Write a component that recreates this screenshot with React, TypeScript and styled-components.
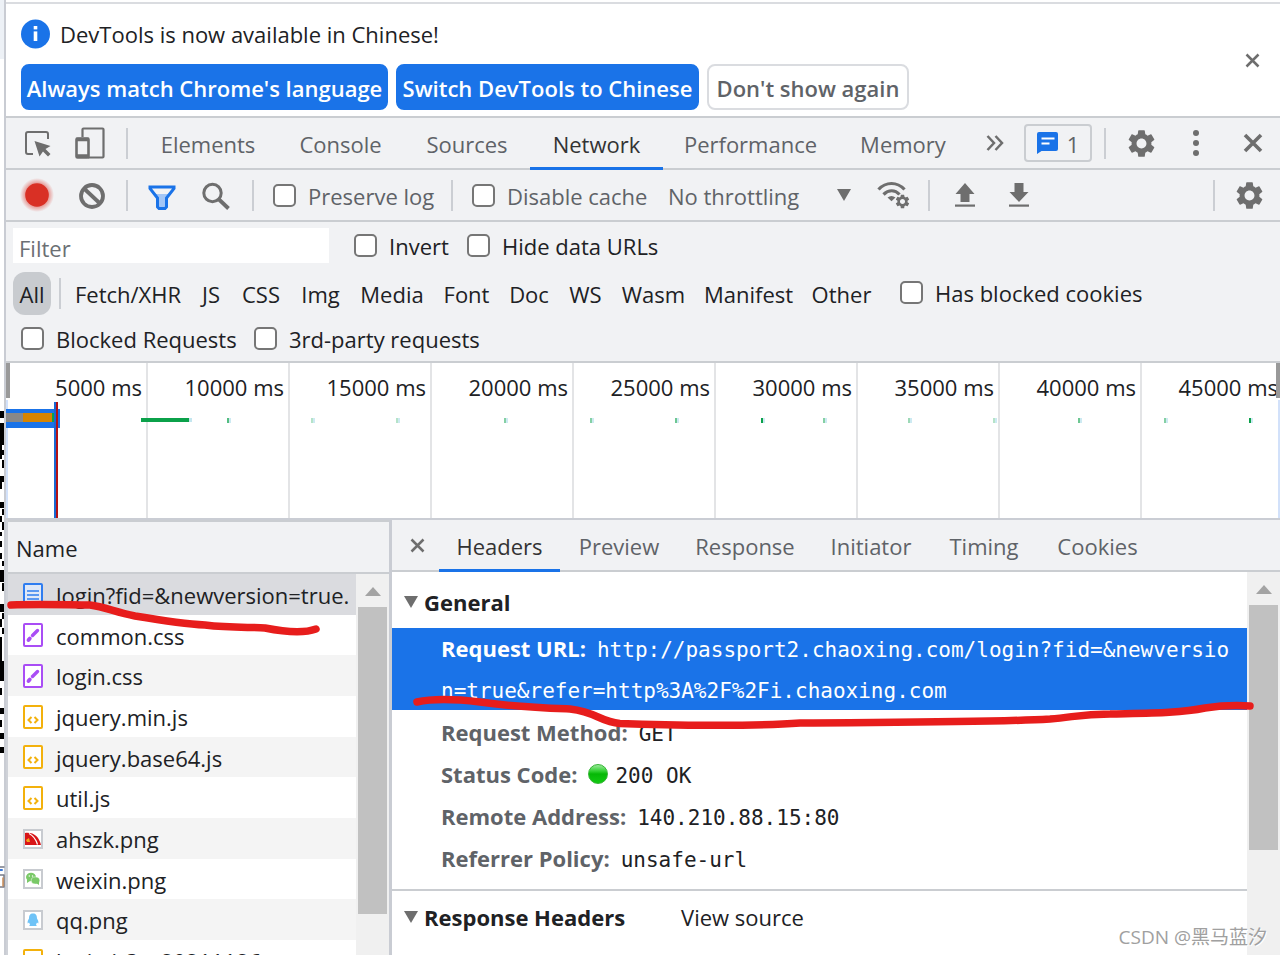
import React from 'react';
import styled, { createGlobalStyle, css } from 'styled-components';
import { MdSettings } from 'react-icons/md';

const GlobalStyle = createGlobalStyle`
  *, *::before, *::after { box-sizing: border-box; }
  html, body { margin: 0; padding: 0; background: #fff; }
  body {
    font-family: 'Open Sans', 'Noto Sans', 'Noto Sans CJK SC', sans-serif;
    font-size: 22px;
    line-height: 30px;
    color: #202124;
    overflow: hidden;
  }
  button, input, select { font: inherit; color: inherit; margin: 0; }
`;

const line = '#cacdd1';
const panel = '#f1f2f4';
const blue = '#1a73e8';
const muted = '#5f6368';
const iconGrey = '#6e6e6e';
const mono = "'DejaVu Sans Mono', 'Liberation Mono', monospace";

const Page = styled.div`
  position: relative;
  display: flex;
  height: 100vh;
  overflow: hidden;
  white-space: nowrap;
`;
const Gutter = styled.div`
  flex: 0 0 6px;
  border-right: 2px solid #c9ccd3;
  background: linear-gradient(#edf1f6 59px, #fff 59px);
`;
const DevTools = styled.main`
  flex: 1;
  min-width: 0;
  display: flex;
  flex-direction: column;
  border-top: 2px solid #dadce0;
  margin-top: 2px;
`;

/* Language notice */
const Infobar = styled.section`
  display: flex;
  justify-content: space-between;
  align-items: center;
  height: 114px;
  flex: none;
  padding: 0 14px 0 15px;
  border-bottom: 2px solid ${line};
`;
const InfoText = styled.div`
  display: flex;
  align-items: center;
  gap: 10px;
  height: 60px;
  padding-bottom: 1px;
`;
const InfoActions = styled.div`
  display: flex;
  gap: 8px;
  height: 52px;
`;
const InfoButton = styled.button<{ $primary?: boolean; $w: number }>`
  width: ${p => p.$w}px;
  height: 46px;
  padding: 2px 0 0;
  border-radius: 8px;
  font-weight: 600;
  border: 2px solid ${p => (p.$primary ? blue : '#dadce0')};
  background: ${p => (p.$primary ? blue : '#fff')};
  color: ${p => (p.$primary ? '#fff' : muted)};
`;

/* Toolbars */
const Bar = styled.div`
  display: flex;
  align-items: center;
  flex: none;
  height: 52px;
  background: ${panel};
  border-bottom: 2px solid ${line};
`;
const MainBar = styled(Bar)`padding-left: 5px;`;
const NetBar = styled(Bar)`padding: 0 4px 0 5px; color: ${muted};`;
const DetailBar = styled(Bar)`padding-left: 4px;`;
const IconButton = styled.button<{ $w?: number }>`
  display: inline-flex;
  align-items: center;
  justify-content: center;
  flex: none;
  width: ${p => p.$w ?? 54}px;
  height: 40px;
  padding: 0;
  border: 0;
  background: none;
  color: ${iconGrey};
`;
const Divider = styled.span<{ $l: number; $r: number }>`
  flex: none;
  width: 2px;
  height: 31px;
  margin: 0 ${p => p.$r}px 0 ${p => p.$l}px;
  background: #cbced3;
`;
const TabList = styled.div`
  display: flex;
  align-self: stretch;
`;
const Tab = styled.button<{ $w: number; $active?: boolean }>`
  width: ${p => p.$w}px;
  height: 52px;
  padding: 0;
  border: 0;
  background: none;
  color: ${muted};
  ${p => p.$active && css`
    color: #333;
    box-shadow: inset 0 -3px ${blue};
  `}
`;
const Right = styled.div`
  display: flex;
  align-items: center;
  margin-left: auto;
`;
const IssueBadge = styled.button`
  display: flex;
  align-items: center;
  justify-content: center;
  gap: 9px;
  width: 68px;
  height: 38px;
  margin-left: 3px;
  padding: 0;
  border: 2px solid ${line};
  border-radius: 4px;
  background: none;
  color: ${muted};
`;

const CheckLabel = styled.label<{ $w?: number }>`
  display: inline-flex;
  align-items: center;
  gap: 12px;
  flex: none;
  width: ${p => (p.$w ? p.$w + 'px' : 'auto')};
  height: 30px;
`;
const CheckInput = styled.input`
  appearance: none;
  flex: none;
  width: 23px;
  height: 23px;
  border: 2px solid #767676;
  border-radius: 5px;
  background: #fff;
`;
const CheckText = styled.span`padding-top: 1px;`;
function Check({ children, w }: { children: string; w?: number }) {
  return (
    <CheckLabel $w={w}>
      <CheckInput type="checkbox" />
      <CheckText>{children}</CheckText>
    </CheckLabel>
  );
}

const SelectWrap = styled.div`
  position: relative;
  width: 192px;
  padding-top: 1px;
  svg { position: absolute; right: 9px; top: 9px; }
`;
const Select = styled.select`
  appearance: none;
  width: 100%;
  padding: 0;
  border: 0;
  background: none;
`;

/* Filters */
const Filters = styled.section`
  flex: none;
  height: 141px;
  padding: 6px 8px 0 7px;
  background: ${panel};
  border-bottom: 2px solid ${line};
`;
const FilterRow = styled.div<{ $h: number; $indent?: number }>`
  display: flex;
  align-items: center;
  height: ${p => p.$h}px;
  padding-left: ${p => p.$indent ?? 0}px;
`;
const FilterInput = styled.input`
  width: 316px;
  height: 35px;
  margin-right: 25px;
  padding: 4px 6px 0;
  border: 0;
  background: #fff;
  &::placeholder { color: #6b6f74; opacity: 1; }
`;
const TypeButton = styled.button<{ $w: number; $active?: boolean }>`
  flex: none;
  width: ${p => p.$w}px;
  height: 43px;
  padding: 2px 0 0;
  border: 0;
  border-radius: 12px;
  background: ${p => (p.$active ? '#c8cbcf' : 'none')};
`;
const Blocked = styled.div`
  margin-left: 19px;
  display: flex;
  height: 32px;
`;

/* Overview timeline */
const Timeline = styled.section`
  position: relative;
  display: flex;
  flex: none;
  height: 157px;
  overflow: hidden;
  background: #fff;
  border-bottom: 2px solid #cacdd4;
`;
const Tick = styled.div`
  flex: 0 0 142px;
  padding: 9px 4px 0 0;
  text-align: right;
  border-right: 2px solid #e3e4e6;
`;
const Marks = styled.svg`
  position: absolute;
  left: 0;
  top: 0;
`;
const RangeHandle = styled.div`
  position: absolute;
  right: 0;
  top: 0;
  width: 4px;
  height: 35px;
  background: #999;
  &::after {
    content: '';
    position: absolute;
    right: 0;
    top: 37px;
    width: 2px;
    height: 120px;
    background: #d2e1fa;
  }
`;

/* Split view */
const Split = styled.div`
  display: flex;
  flex: 1;
  min-height: 0;
`;
const ListPane = styled.section`
  flex: 0 0 386px;
  display: grid;
  grid-template-columns: 1fr 33px;
  grid-template-rows: 1fr;
  border-left: 2px solid #cfd2d8;
  border-right: 3px solid #c9ccd3;
  overflow: hidden;
`;
const FileTable = styled.table`
  width: 100%;
  border-spacing: 0;
  table-layout: fixed;
`;
const NameHead = styled.th`
  height: 54px;
  padding: 2px 0 0 8px;
  text-align: left;
  font-weight: 400;
  background: ${panel};
  border-top: 2px solid ${line};
  border-bottom: 2px solid ${line};
`;
const FileRow = styled.tr`
  height: 41px;
  &:nth-child(3n + 2) { height: 40px; }
  &:nth-child(odd) { background: #f4f4f4; }
  &:nth-child(1) { background: #dadbdf; }
`;
const FileCell = styled.td`padding: 0; overflow: hidden;`;
const FileInner = styled.div`
  display: flex;
  align-items: center;
  gap: 13px;
  height: 40px;
  padding-left: 15px;
  overflow: hidden;
  svg { flex: none; }
`;
const FileName = styled.span`padding-top: 1px;`;
const ListHeadFill = styled.div`
  height: 54px;
  background: ${panel};
  border-top: 2px solid ${line};
  border-bottom: 2px solid ${line};
`;
const Column = styled.div`
  display: flex;
  flex-direction: column;
  min-height: 0;
`;
const Scrollbar = styled.div<{ $fill?: boolean }>`
  flex: ${p => (p.$fill ? '1' : 'none')};
  width: 33px;
  background: #f0f0f0;
  display: flex;
  flex-direction: column;
  align-items: center;
`;
const ScrollArrow = styled.span`
  display: flex;
  align-items: center;
  justify-content: center;
  height: 33px;
  padding-top: 2px;
`;
const Thumb = styled.span<{ $h: number }>`
  width: 29px;
  height: ${p => p.$h}px;
  background: #c1c1c1;
`;

const Detail = styled.section`
  flex: 1;
  min-width: 0;
  display: flex;
  flex-direction: column;
`;
const DetailBody = styled.div`
  display: flex;
  flex: 1;
  min-height: 0;
`;
const DetailContent = styled.div`
  flex: 1;
  min-width: 0;
  overflow: hidden;
`;
const SectionHead = styled.div<{ $h: number }>`
  display: flex;
  align-items: center;
  gap: 6px;
  height: ${p => p.$h}px;
  padding: 4px 0 0 12px;
`;
const SectionTitle = styled.h2`
  margin: 0;
  font-size: 22px;
  line-height: 30px;
  font-weight: 700;
`;
const ViewSource = styled.button`
  margin-left: 50px;
  padding: 0;
  border: 0;
  background: none;
`;
const Headers = styled.dl`
  margin: 0;
  padding-bottom: 10px;
  border-bottom: 2px solid ${line};
`;
const HeaderRow = styled.div<{ $selected?: boolean }>`
  display: flex;
  align-items: baseline;
  height: 42px;
  padding: 6px 0 0 49px;
  color: ${muted};
  ${p => p.$selected && css`
    display: block;
    height: auto;
    margin-bottom: 1px;
    padding: 0 12px 0 49px;
    line-height: 41px;
    white-space: normal;
    word-break: break-all;
    background: ${blue};
    color: #fff;
  `}
`;
const Key = styled.dt`
  display: inline;
  margin-right: 11px;
  font-weight: 700;
`;
const Value = styled.dd<{ $selected?: boolean }>`
  display: inline;
  margin: 0;
  font-family: ${mono};
  font-size: 21px;
  line-height: 30px;
  color: ${p => (p.$selected ? '#fff' : '#202124')};
`;
const StatusDot = styled.span`
  display: inline-block;
  width: 20px;
  height: 20px;
  margin-right: 7px;
  vertical-align: -1px;
  border-radius: 50%;
  background: linear-gradient(#9be89b, #2fd02f 35%, #06b806 50%, #12c912);
  border: 1px solid #35b535;
`;

const Strokes = styled.svg`
  position: absolute;
  left: 0;
  top: 0;
  pointer-events: none;
`;
const Watermark = styled.div`
  position: absolute;
  right: 13px;
  bottom: 3px;
  font-size: 19px;
  font-family: 'Open Sans', 'Noto Sans CJK SC', sans-serif;
  color: #a0a0a0;
  text-shadow: 1px 1px #fff;
`;

const Cross = ({ size, w }: { size: number; w: number }) => (
  <svg width={size} height={size} viewBox="0 0 20 20" stroke="currentColor" strokeWidth={w}>
    <path d="M2 2 18 18M18 2 2 18" />
  </svg>
);
const InfoIcon = () => (
  <svg width="29" height="30" viewBox="0 0 29 30">
    <circle cx="14.5" cy="15" r="14.5" fill={blue} />
    <rect x="12.7" y="7" width="3.6" height="3.4" fill="#fff" />
    <rect x="12.7" y="12.4" width="3.6" height="9.6" fill="#fff" />
  </svg>
);
const InspectIcon = () => (
  <svg width="26" height="28" viewBox="0 -2 26 28" fill="none" stroke="currentColor" strokeWidth="2">
    <path d="M8 23H3a2 2 0 0 1-2-2V3a2 2 0 0 1 2-2h18a2 2 0 0 1 2 2v5" />
    <path d="M9.500 10 25.500 15l-5 3 5 5-2.500 2.500-5-5L14.500 25.500z" fill="currentColor" stroke="none" />
  </svg>
);
const DeviceIcon = () => (
  <svg width="30" height="32" viewBox="0 0 30 32" fill="none" stroke="currentColor">
    <path d="M7.500 10V2.500a1 1 0 0 1 1-1h19a1 1 0 0 1 1 1v27a1 1 0 0 1-1 1H13" strokeWidth="2.200" />
    <rect x="1.500" y="11.500" width="12" height="19" rx="1" strokeWidth="2.600" />
    <path d="M1 12.500h13M1 29h13" strokeWidth="3.500" />
  </svg>
);
const MoreTabsIcon = () => (
  <svg width="18" height="16" viewBox="0 0 18 16" fill="none" stroke="currentColor" strokeWidth="2.500">
    <path d="M1.500 1 8 8l-6.500 7M9.500 1 16 8l-6.500 7" />
  </svg>
);
const ChatIcon = () => (
  <svg width="21" height="22" viewBox="0 0 21 22">
    <path d="M2 0h17a2 2 0 0 1 2 2v15a2 2 0 0 1-2 2H4.500L0 22V2a2 2 0 0 1 2-2z" fill={blue} />
    <path d="M4.500 6.500h13M4.500 11.500h8" stroke="#fff" strokeWidth="2" />
  </svg>
);
const DotsIcon = () => (
  <svg width="6" height="26" viewBox="0 0 6 26" fill="currentColor">
    <circle cx="3" cy="3" r="3" /><circle cx="3" cy="13" r="3" /><circle cx="3" cy="23" r="3" />
  </svg>
);
const RecordIcon = () => (
  <svg width="36" height="36" viewBox="0 0 36 36">
    <defs>
      <radialGradient id="glow">
        <stop offset="65%" stopColor="#d93025" stopOpacity=".5" />
        <stop offset="100%" stopColor="#d93025" stopOpacity="0" />
      </radialGradient>
    </defs>
    <circle cx="18" cy="18" r="17" fill="url(#glow)" />
    <circle cx="18" cy="18" r="11.800" fill="#d93025" />
  </svg>
);
const ClearIcon = () => (
  <svg width="26" height="28" viewBox="0 -2 26 28" fill="none" stroke="currentColor" strokeWidth="3.800">
    <circle cx="13" cy="13" r="11" /><path d="M5 5.500 21 20.500" />
  </svg>
);
const FunnelIcon = () => (
  <svg width="28" height="29" viewBox="0 -4 28 29">
    <path d="M7 9h14l-3.500 5v8.500h-7V14z" fill="#a3c6f6" />
    <path d="M2 2h24v1.500L18.500 13v9L17 23.500h-6L9.500 22v-9L2 3.500z" fill="none" stroke={blue} strokeWidth="3" />
  </svg>
);
const SearchIcon = () => (
  <svg width="28" height="30" viewBox="0 -2 28 30" fill="none" stroke="currentColor">
    <circle cx="10.500" cy="11" r="8.700" strokeWidth="3" /><path d="m16.500 17 10 9.500" strokeWidth="3.800" />
  </svg>
);
const WifiIcon = () => (
  <svg width="34" height="28" viewBox="0 0 34 28" fill="none" stroke="currentColor" strokeWidth="3.200">
    <path d="M1.500 8.500C9 .5 20 .5 27.500 8.500" />
    <path d="M6.500 13.500c5-5 11.500-5 16 0" />
    <path d="M10.500 16.500q4-3 8 0l-4 3.700z" fill="currentColor" stroke="none" />
    <MdSettings x="17" y="12" size={17} color="currentColor" strokeWidth="0" />
  </svg>
);
const TransferIcon = ({ up }: { up?: boolean }) => (
  <svg width="20" height="24" viewBox="0 0 20 24" fill="currentColor">
    <path d={up ? 'M10 0 19.500 11h-5v8h-9v-8h-5z' : 'M10 19 19.500 9h-5V0h-9v9h-5z'} />
    <rect y="21.500" width="20" height="2.200" />
  </svg>
);
const Down = () => (
  <svg width="14" height="12" viewBox="0 0 14 12"><path d="M0 0h14L7 12z" fill={iconGrey} /></svg>
);
const Up = () => (
  <svg width="16" height="9" viewBox="0 0 16 9"><path d="M0 9h16L8 0z" fill="#a3a3a3" /></svg>
);

type Kind = 'doc' | 'css' | 'js' | 'ahszk' | 'weixin' | 'qq';
function FileIcon({ kind }: { kind: Kind }) {
  if (kind === 'doc' || kind === 'css' || kind === 'js') {
    const color = { doc: '#2f7df0', css: '#a94df5', js: '#f3b10c' }[kind];
    return (
      <svg width="20" height="24" viewBox="0 0 20 24" fill="none" stroke={color}>
        <rect x="1" y="1" width="18" height="22" rx="1" strokeWidth="2" fill={kind === 'doc' ? '#dfe8f7' : '#fff'} />
        {kind === 'doc' && <path d="M4 8h12M4 12h12M4 16h12M4 20h12" strokeWidth="1.700" />}
        {kind === 'css' && (
          <g strokeLinecap="round">
            <path d="m9.500 12.500 5-5" strokeWidth="3.400" /><path d="m5.500 17 1.300-1.500" strokeWidth="3.800" />
          </g>
        )}
        {kind === 'js' && <path d="m8.500 12-3 3 3 3M11.500 12l3 3-3 3" strokeWidth="2" />}
      </svg>
    );
  }
  return (
    <svg width="20" height="20" viewBox="0 0 20 20">
      <rect x="1" y="1" width="18" height="18" fill="#fff" stroke="#c8cbd0" strokeWidth="2" />
      {kind === 'ahszk' && (
        <g>
          <path d="M2 4c9-1 14 4 16 12H2z" fill="#d81518" />
          <path d="M6 4.500c4 2 7 6 8.500 11" fill="none" stroke="#fff" strokeWidth="1.200" />
          <path d="M3 11l3-2 1 4H4z" fill="#f2a51b" />
        </g>
      )}
      {kind === 'weixin' && (
        <g fill="#7ac968">
          <ellipse cx="8" cy="8" rx="5" ry="4.300" /><path d="m4 10 0 4 3-2z" />
          <ellipse cx="12.500" cy="11.500" rx="4.300" ry="3.600" stroke="#fff" strokeWidth=".5" /><path d="m13 14 3 2v-4z" />
          <g fill="#fff"><circle cx="6.300" cy="7" r=".7" /><circle cx="9.500" cy="7" r=".7" /></g>
        </g>
      )}
      {kind === 'qq' && (
        <path d="M10 3.500c3 0 4 2 4 5 1 1.500 1.700 3 1.300 5l-1.300-1-1 2 .8 1.500H6.200L7 14.500l-1-2-1.300 1c-.4-2 .3-3.500 1.300-5 0-3 1-5 4-5z" fill="#6fc3f7" />
      )}
    </svg>
  );
}

const tabs: [string, number][] = [
  ['Elements', 138], ['Console', 127], ['Sources', 126], ['Network', 133], ['Performance', 175], ['Memory', 130],
];
const detailTabs: [string, number][] = [
  ['Headers', 121], ['Preview', 118], ['Response', 134], ['Initiator', 118], ['Timing', 108], ['Cookies', 119],
];
const types: [string, number][] = [
  ['Fetch/XHR', 126], ['JS', 40], ['CSS', 60], ['Img', 59], ['Media', 84], ['Font', 65],
  ['Doc', 60], ['WS', 53], ['Wasm', 83], ['Manifest', 107], ['Other', 79],
];
const files: [string, Kind][] = [
  ['login?fid=&newversion=true.', 'doc'], ['common.css', 'css'], ['login.css', 'css'],
  ['jquery.min.js', 'js'], ['jquery.base64.js', 'js'], ['util.js', 'js'],
  ['ahszk.png', 'ahszk'], ['weixin.png', 'weixin'], ['qq.png', 'qq'], ['login.js?v=20211126', 'js'],
];
const ticks = [5, 10, 15, 20, 25, 30, 35, 40, 45];
const requests: [number, number][] = [
  [221, .7], [305, .3], [390, .3], [498, .5], [584, .5], [669, .6], [755, 1],
  [817, .5], [902, .4], [987, .3], [1072, .6], [1158, .5], [1243, 1],
];
const noise: [number, number, number, number][] = [
  [0, 411, 4, 7], [0, 423, 4, 22], [0, 445, 2, 14], [2, 450, 2, 5], [2, 460, 2, 8], [0, 476, 4, 6],
  [0, 482, 2, 7], [0, 502, 4, 6], [2, 509, 2, 6], [0, 516, 2, 6], [2, 522, 2, 8], [0, 532, 2, 4],
  [0, 541, 2, 6], [0, 553, 2, 6], [2, 561, 2, 5], [0, 570, 4, 12], [2, 583, 2, 8], [0, 604, 4, 8],
  [2, 613, 2, 6], [0, 619, 2, 8], [2, 628, 2, 6], [0, 637, 2, 24], [0, 661, 4, 20],
  [0, 688, 2, 7], [0, 708, 4, 6], [0, 720, 2, 7], [0, 733, 4, 6], [0, 747, 4, 6],
];

export default function App() {
  return (
    <Page>
      <GlobalStyle />
      <Gutter />
      <DevTools>
        <Infobar>
          <div>
            <InfoText><InfoIcon /><span>DevTools is now available in Chinese!</span></InfoText>
            <InfoActions>
              <InfoButton $primary $w={367}>Always match Chrome's language</InfoButton>
              <InfoButton $primary $w={303}>Switch DevTools to Chinese</InfoButton>
              <InfoButton $w={202}>Don't show again</InfoButton>
            </InfoActions>
          </div>
          <IconButton $w={27} aria-label="Close notice"><Cross size={15} w={3.4} /></IconButton>
        </Infobar>

        <MainBar>
          <IconButton $w={53} aria-label="Inspect"><InspectIcon /></IconButton>
          <IconButton $w={52} aria-label="Device toolbar"><DeviceIcon /></IconButton>
          <Divider $l={10} $r={11} />
          <TabList>
            {tabs.map(([t, w]) => <Tab key={t} $w={w} $active={t === 'Network'}>{t}</Tab>)}
          </TabList>
          <IconButton $w={53} aria-label="More tabs"><MoreTabsIcon /></IconButton>
          <Right>
            <IssueBadge><ChatIcon /><CheckText>1</CheckText></IssueBadge>
            <Divider $l={12} $r={9} />
            <IconButton $w={52} aria-label="Settings"><MdSettings size={33} /></IconButton>
            <IconButton $w={58} aria-label="More options"><DotsIcon /></IconButton>
            <IconButton $w={55} aria-label="Close"><Cross size={20} w={3.6} /></IconButton>
          </Right>
        </MainBar>

        <NetBar>
          <IconButton $w={52} aria-label="Record"><RecordIcon /></IconButton>
          <IconButton $w={58} aria-label="Clear"><ClearIcon /></IconButton>
          <Divider $l={5} $r={8} />
          <IconButton $w={52} aria-label="Filter"><FunnelIcon /></IconButton>
          <IconButton $w={56} aria-label="Search"><SearchIcon /></IconButton>
          <Divider $l={8} $r={19} />
          <Check w={178}>Preserve log</Check>
          <Divider $l={0} $r={19} />
          <Check w={196}>Disable cache</Check>
          <SelectWrap>
            <Select aria-label="Throttling"><option>No throttling</option></Select>
            <Down />
          </SelectWrap>
          <IconButton $w={68} aria-label="Network conditions"><WifiIcon /></IconButton>
          <Divider $l={0} $r={8} />
          <IconButton aria-label="Import"><TransferIcon up /></IconButton>
          <IconButton aria-label="Export"><TransferIcon /></IconButton>
          <Right>
            <Divider $l={0} $r={7} />
            <IconButton aria-label="Network settings"><MdSettings size={33} /></IconButton>
          </Right>
        </NetBar>

        <Filters>
          <FilterRow $h={35}>
            <FilterInput placeholder="Filter" aria-label="Filter" />
            <Check w={113}>Invert</Check>
            <Check>Hide data URLs</Check>
          </FilterRow>
          <FilterRow $h={60}>
            <TypeButton $w={38} $active>All</TypeButton>
            <Divider $l={8} $r={4} />
            {types.map(([t, w]) => <TypeButton key={t} $w={w}>{t}</TypeButton>)}
            <Blocked><Check>Has blocked cookies</Check></Blocked>
          </FilterRow>
          <FilterRow $h={30} $indent={8}>
            <Check w={233}>Blocked Requests</Check>
            <Check>3rd-party requests</Check>
          </FilterRow>
        </Filters>

        <Timeline>
          {ticks.map(t => <Tick key={t}>{t}000 ms</Tick>)}
          <Marks width="1274" height="155">
            <rect width="4" height="35" fill="#999" />
            <rect y="37" width="2" height="118" fill="#d2e1fa" />
            <rect y="46" width="54" height="19" fill={blue} />
            <rect y="50" width="17" height="9" fill="#888" />
            <rect x="17" y="50" width="29" height="9" fill="#d68400" />
            <rect x="46" y="50" width="2" height="9" fill="#0ba14a" />
            <rect x="48" y="39" width="2" height="116" fill="#1967d2" />
            <rect x="50" y="39" width="2" height="116" fill="#b01116" />
            <rect x="135" y="55" width="48" height="4" fill="#0ba14a" />
            <rect x="183" y="55" width="3" height="4" fill="#c4e6ef" />
            {requests.map(([x, o]) => (
              <g key={x}>
                <rect x={x} y="55" width="2" height="5" fill="#0ba14a" opacity={o} />
                <rect x={x + 2} y="55" width="2" height="5" fill="#cdeaf2" />
              </g>
            ))}
          </Marks>
          <RangeHandle />
        </Timeline>

        <Split>
          <ListPane>
            <FileTable>
              <thead><tr><NameHead>Name</NameHead></tr></thead>
              <tbody>
                {files.map(([name, kind]) => (
                  <FileRow key={name}>
                    <FileCell>
                      <FileInner><FileIcon kind={kind} /><FileName>{name}</FileName></FileInner>
                    </FileCell>
                  </FileRow>
                ))}
              </tbody>
            </FileTable>
            <Column>
              <ListHeadFill />
              <Scrollbar $fill><ScrollArrow><Up /></ScrollArrow><Thumb $h={307} /></Scrollbar>
            </Column>
          </ListPane>

          <Detail>
            <DetailBar>
              <IconButton $w={43} aria-label="Close details"><Cross size={15} w={3.4} /></IconButton>
              <TabList>
                {detailTabs.map(([t, w]) => <Tab key={t} $w={w} $active={t === 'Headers'}>{t}</Tab>)}
              </TabList>
            </DetailBar>
            <DetailBody>
              <DetailContent>
                <SectionHead $h={56}><Down /><SectionTitle>General</SectionTitle></SectionHead>
                <Headers>
                  <HeaderRow $selected>
                    <Key>Request URL:</Key>
                    <Value $selected>http://passport2.chaoxing.com/login?fid=&amp;newversion=true&amp;refer=http%3A%2F%2Fi.chaoxing.com</Value>
                  </HeaderRow>
                  <HeaderRow><Key>Request Method:</Key><Value>GET</Value></HeaderRow>
                  <HeaderRow><Key>Status Code:</Key><Value><StatusDot />200 OK</Value></HeaderRow>
                  <HeaderRow><Key>Remote Address:</Key><Value>140.210.88.15:80</Value></HeaderRow>
                  <HeaderRow><Key>Referrer Policy:</Key><Value>unsafe-url</Value></HeaderRow>
                </Headers>
                <SectionHead $h={48}>
                  <Down /><SectionTitle>Response Headers</SectionTitle>
                  <ViewSource>View source</ViewSource>
                </SectionHead>
              </DetailContent>
              <Scrollbar><ScrollArrow><Up /></ScrollArrow><Thumb $h={245} /></Scrollbar>
            </DetailBody>
          </Detail>
        </Split>
      </DevTools>

      <Strokes width="1280" height="955" fill="none" strokeLinecap="round" strokeLinejoin="round">
        <g fill="#000">{noise.map(([x, y, w, h]) => <rect key={y} x={x} y={y} width={w} height={h} />)}</g>
        <path d="M0 867h4M0 875h4v12H0" stroke="#777b88" strokeWidth="1.500" />
        <path d="M0 870h2" stroke="#3b78d8" strokeWidth="2" />
        <path d="M3 878v8" stroke="#c98a55" strokeWidth="1.500" />
        <path d="M11 605C40 604 70 605 90 605C105 607 115 612 135 616C165 621 185 624 205 625C230 628 250 627 265 628C285 632 305 633 316 629" stroke="#e71d1c" strokeWidth="7.500" />
        <path d="M417 702C435 698 455 699 480 702C515 707 545 708 570 709C597 712 600 722 620 723.500C680 726 760 726 800 723C880 722 980 723 1050 719C1075 717 1080 714 1110 714C1150 713 1180 713 1205 708C1225 705 1235 705 1250 706" stroke="#e71d1c" strokeWidth="7.500" />
      </Strokes>
      <Watermark>CSDN @黑马蓝汐</Watermark>
    </Page>
  );
}
